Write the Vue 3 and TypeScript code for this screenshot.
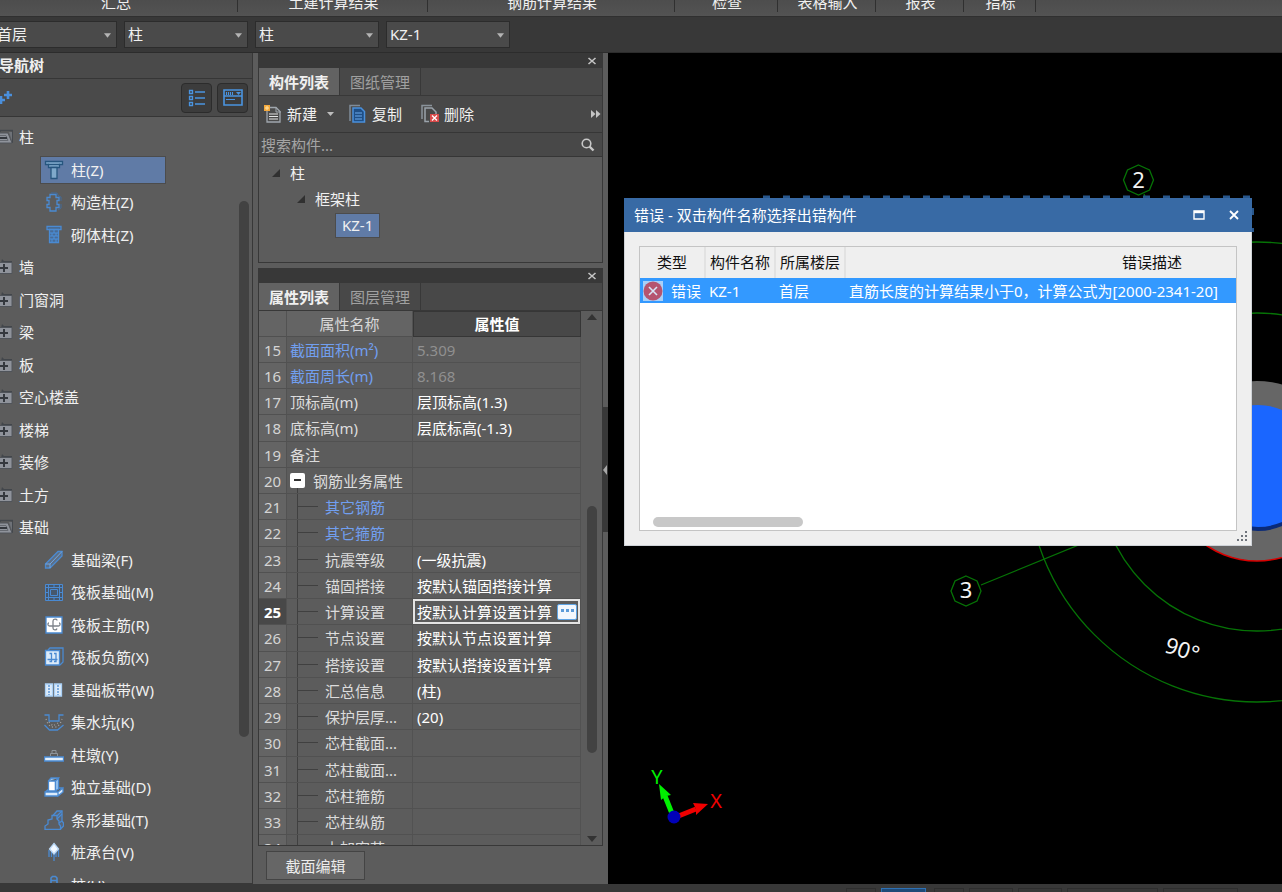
<script setup lang="ts">
import { ref } from 'vue'

interface NavItem {
  label: string
  icon: string
}
interface NavGroup {
  label: string
  open: boolean
  items: NavItem[]
}
interface PropRow {
  no: number
  name: string
  value: string
  kind?: 'readonly' | 'link' | 'group' | 'child' | 'childLink'
}

const ribbonGroups = [
  { label: '汇总', width: 'w-a' },
  { label: '土建计算结果', width: 'w-b' },
  { label: '钢筋计算结果', width: 'w-c' },
  { label: '检查', width: 'w-d' },
  { label: '表格输入', width: 'w-e' },
  { label: '报表', width: 'w-f' },
  { label: '指标', width: 'w-g' },
]

const pickers = [
  { name: '楼层', value: '首层' },
  { name: '构件分类', value: '柱' },
  { name: '构件类型', value: '柱' },
  { name: '构件', value: 'KZ-1' },
]

const closed = (label: string): NavGroup => ({ label, open: false, items: [] })

const navGroups: NavGroup[] = [
  {
    label: '柱',
    open: true,
    items: [
      { label: '柱(Z)', icon: 'column' },
      { label: '构造柱(Z)', icon: 'tie' },
      { label: '砌体柱(Z)', icon: 'brick' },
    ],
  },
  closed('墙'),
  closed('门窗洞'),
  closed('梁'),
  closed('板'),
  closed('空心楼盖'),
  closed('楼梯'),
  closed('装修'),
  closed('土方'),
  {
    label: '基础',
    open: true,
    items: [
      { label: '基础梁(F)', icon: 'beam' },
      { label: '筏板基础(M)', icon: 'raft' },
      { label: '筏板主筋(R)', icon: 'mainbar' },
      { label: '筏板负筋(X)', icon: 'negbar' },
      { label: '基础板带(W)', icon: 'strip' },
      { label: '集水坑(K)', icon: 'pit' },
      { label: '柱墩(Y)', icon: 'pier' },
      { label: '独立基础(D)', icon: 'isolated' },
      { label: '条形基础(T)', icon: 'stripfoot' },
      { label: '桩承台(V)', icon: 'cap' },
      { label: '桩(U)', icon: 'pile' },
    ],
  },
]

const navRows = navGroups.flatMap((g) => [
  { type: 'group', label: g.label, open: g.open, icon: '' },
  ...g.items.map((i) => ({ type: 'item', label: i.label, open: false, icon: i.icon })),
])

const activeNav = ref('柱(Z)')
const activeRow = ref(25)
const keyword = ref('')

const props: PropRow[] = [
  { no: 15, name: '截面面积(m²)', value: '5.309', kind: 'readonly' },
  { no: 16, name: '截面周长(m)', value: '8.168', kind: 'readonly' },
  { no: 17, name: '顶标高(m)', value: '层顶标高(1.3)' },
  { no: 18, name: '底标高(m)', value: '层底标高(-1.3)' },
  { no: 19, name: '备注', value: '' },
  { no: 20, name: '钢筋业务属性', value: '', kind: 'group' },
  { no: 21, name: '其它钢筋', value: '', kind: 'childLink' },
  { no: 22, name: '其它箍筋', value: '', kind: 'childLink' },
  { no: 23, name: '抗震等级', value: '(一级抗震)', kind: 'child' },
  { no: 24, name: '锚固搭接', value: '按默认锚固搭接计算', kind: 'child' },
  { no: 25, name: '计算设置', value: '按默认计算设置计算', kind: 'child' },
  { no: 26, name: '节点设置', value: '按默认节点设置计算', kind: 'child' },
  { no: 27, name: '搭接设置', value: '按默认搭接设置计算', kind: 'child' },
  { no: 28, name: '汇总信息', value: '(柱)', kind: 'child' },
  { no: 29, name: '保护层厚...', value: '(20)', kind: 'child' },
  { no: 30, name: '芯柱截面...', value: '', kind: 'child' },
  { no: 31, name: '芯柱截面...', value: '', kind: 'child' },
  { no: 32, name: '芯柱箍筋', value: '', kind: 'child' },
  { no: 33, name: '芯柱纵筋', value: '', kind: 'child' },
  { no: 34, name: '上加密范', value: '', kind: 'child' },
]

const isChild = (r: PropRow) => r.kind === 'child' || r.kind === 'childLink'
const isBlue = (r: PropRow) => r.kind === 'readonly' || r.kind === 'childLink'
</script>

<template>
  <div class="app">
    <header class="ribbon shifted">
      <div v-for="g in ribbonGroups" :key="g.label" class="ribbon-group" :class="g.width">{{ g.label }}</div>
    </header>

    <div class="pickers shifted">
      <label v-for="p in pickers" :key="p.name" class="picker">
        <select :aria-label="p.name">
          <option>{{ p.value }}</option>
        </select>
        <svg class="picker-arrow" viewBox="0 0 8 5" aria-hidden="true"><path d="M0 0h8L4 5z" fill="#b4b4b4" /></svg>
      </label>
    </div>

    <main class="work shifted">
      <nav class="nav">
        <h2 class="nav-title">导航树</h2>
        <div class="nav-tools">
          <button class="plain" aria-label="添加">
            <svg width="20" height="20" viewBox="0 0 20 20"><path d="M15 3v8M11 7h8M8 8v8M4 12h8" stroke="#4a8fdc" stroke-width="2.600" /></svg>
          </button>
          <span class="spacer"></span>
          <button class="view-btn" aria-label="列表视图">
            <svg width="18" height="18" viewBox="0 0 18 18" fill="none" stroke="#4a94e0">
              <path d="M1.500 1.500h3v3h-3zM1.500 7.500h3v3h-3zM1.500 13.500h3v3h-3z" stroke-width="1.300" />
              <path d="M7 3h10M7 9h10M7 15h10" stroke-width="1.400" />
            </svg>
          </button>
          <button class="view-btn" aria-label="面板视图">
            <svg width="20" height="18" viewBox="0 0 20 18" fill="none" stroke="#4a94e0">
              <path d="M1 1h18v15H1zM1 7h18" stroke-width="1.600" />
              <path d="M3.500 3v3M5.500 3v3M7.500 3v3M9.500 3v3M3 10.500h9" stroke-width="1.100" />
              <path d="M13 3h5l-2.500 3z" fill="#4a94e0" stroke="none" />
            </svg>
          </button>
        </div>
        <div class="nav-body">
          <ul class="nav-list">
            <li v-for="r in navRows" :key="r.label">
              <button v-if="r.type === 'group'" class="nav-group" :aria-expanded="r.open">
                <svg v-if="r.open" width="18" height="16" viewBox="0 0 18 16">
                  <path d="M5 3V1.500h12.500V14" fill="none" stroke="#44484d" stroke-width="1.500" />
                  <path d="M0 4h13l4 10H0z" fill="#8f939b" stroke="#50545a" />
                  <path d="M14 3h3v9z" fill="#6e7278" />
                  <path d="M0 6.500h11l2 5H0" fill="none" stroke="#666a71" />
                  <path d="M5 9h7" stroke="#34383e" stroke-width="2" />
                </svg>
                <svg v-else width="18" height="16" viewBox="0 0 18 16">
                  <path d="M6 4l1-4 2 2h8v2z" fill="#42464b" />
                  <path d="M0 3.500h17v11H0z" fill="#8f939b" stroke="#50545a" />
                  <path d="M5 9h8M9 5v8" stroke="#34383e" stroke-width="2" />
                </svg>
                <span>{{ r.label }}</span>
              </button>
              <button v-else class="nav-item" :class="{ active: r.label === activeNav }" @click="activeNav = r.label">
                <svg width="20" height="20" viewBox="0 0 20 20" fill="none" stroke="#4a8ad2" stroke-width="1.300">
                  <g v-if="r.icon === 'column'" fill="#7fa9cb" stroke="#27567f">
                    <path d="M1.500 1.500h17v3h-3v3h-11v-3h-3z" />
                    <path d="M4 4.500h12" />
                    <path d="M7 7.500h6v11H7z" />
                  </g>
                  <g v-else-if="r.icon === 'tie'">
                    <path d="M6 2.500h6v3h3v3h-2v4h2v3h-3v3.500H6v-3.500H3v-3h2v-4H3v-3h3z" />
                    <path d="M7 1h6l1.500 3 2.500 1v4M17 12v4l-3 2" stroke-width="0.800" stroke="#3e6ea8" />
                  </g>
                  <g v-else-if="r.icon === 'brick'">
                    <path d="M3 1.500h14v3H3z" fill="#48617f" />
                    <path d="M5.500 4.500h9v13h-9z" fill="#486c98" />
                    <path d="M5.500 8h9M5.500 11h9M5.500 14h9M10 5v3M8 8v3M12 8v3M10 11v3M8 14v3M12 14v3" stroke="#4a90dc" stroke-width="1" />
                  </g>
                  <g v-else-if="r.icon === 'beam'">
                    <path d="M1.500 14L14 1.500h4V6L6 18H1.500z" fill="#5d6f85" />
                    <path d="M1.500 14H6v4M6 14L18 1.500" stroke="#72a7e4" stroke-width="1" />
                  </g>
                  <g v-else-if="r.icon === 'raft'" stroke-width="1">
                    <path d="M1.500 2.500h17v16h-17z" fill="#46576c" />
                    <path d="M6.500 7.500h7v6h-7zM4.500 2.500v16M15.500 2.500v16M1.500 5.500h17M1.500 15.500h17" />
                    <path d="M10 2.500v3M10 15.500v3M1.500 10.500h3M15.500 10.500h3" />
                  </g>
                  <g v-else-if="r.icon === 'mainbar'">
                    <path d="M2 2h16v16H2z" fill="#fff" />
                    <path d="M13 5.500c0-2-4-2-4 .500v7c0 2.500 3.500 2.500 4 .500M5 8c-1.500 0-1.500 3 .500 3h9c2 0 2-3 .500-3" stroke="#7d838a" />
                  </g>
                  <g v-else-if="r.icon === 'negbar'">
                    <path d="M4 3L6 1h13v14l-3 3" />
                    <path d="M1.500 3.500h14V18h-14z" fill="#dcebfa" />
                    <path d="M3.500 12.500h10M5.500 6.500h2v8h-2M10 6.500h2v8h-2" />
                  </g>
                  <g v-else-if="r.icon === 'strip'">
                    <path d="M1.500 4h7v12h-7zM10.500 4h7v12h-7z" fill="#dcebfa" stroke="#a9cff5" />
                    <path d="M5 5v10M14 5v10" stroke-dasharray="2 1" />
                  </g>
                  <g v-else-if="r.icon === 'pit'">
                    <path d="M.500 3H5v6h10V3h4.500M.500 13l5 5h8l6-5" />
                    <path d="M2 7l2 5 3 3h6l3-3 2-5M5 10l4 4 5-3" stroke="#a0a0a0" stroke-dasharray="1 2.500" />
                  </g>
                  <g v-else-if="r.icon === 'pier'">
                    <path d="M8 5.500h4v3H8zM6.500 11V8.500h7V11" stroke="#8d949b" stroke-width="1" />
                    <path d="M.500 12h19v4H.500z" fill="#e4f0fc" />
                  </g>
                  <g v-else-if="r.icon === 'isolated'">
                    <path d="M1 15h13v4H1zM14 15l5-4v4l-5 4zM1 15l4-3h3M14 11l5 0" fill="#dcebfa" />
                    <path d="M4.500 4h7v10h-7z" fill="#fff" />
                    <path d="M4.500 4L7 1h7.500l-3 3v10l3-2V1" fill="#9cc6f0" />
                  </g>
                  <g v-else-if="r.icon === 'stripfoot'">
                    <path d="M9 5.500L13 1h5v10l1.500 2v3L16 19.500" fill="#5b6472" />
                    <path d="M1 19.500V16l3-2v-4l4-1V5.500h5V9l2 2v3l1.500 2v3.500z" fill="#5c5e62" />
                    <path d="M13 6l5-5M13 9l5-5M15 13l3-2" />
                  </g>
                  <g v-else-if="r.icon === 'cap'">
                    <path d="M5 8v7M14.500 8v7M7.500 9v6M12 9v6M10 11v8" stroke-width="1.300" />
                    <path d="M10 1.500L14.500 7l-4.500 5L5.500 7z" fill="#f2f8ff" stroke="#b8d6f5" />
                  </g>
                  <g v-else>
                    <path d="M7 6V3l1.500-1.500h3L13 3v16H7zM7 5.500h6" stroke-width="1.600" />
                  </g>
                </svg>
                <span>{{ r.label }}</span>
              </button>
            </li>
          </ul>
          <span class="nav-thumb"></span>
        </div>
      </nav>

      <section class="side">
        <div class="panel list-panel">
          <div class="panel-bar">
            <button class="plain" aria-label="关闭">
              <svg width="10" height="8" viewBox="0 0 10 8"><path d="M1.500 1l7 6M8.500 1l-7 6" stroke="#c4c4c4" stroke-width="1.600" /></svg>
            </button>
          </div>
          <div class="tabs" role="tablist">
            <button class="tab on" role="tab" aria-selected="true">构件列表</button>
            <button class="tab" role="tab" aria-selected="false">图纸管理</button>
          </div>
          <div class="tools">
            <button class="tool">
              <svg width="20" height="20" viewBox="0 0 20 20">
                <path d="M4 3.500h9l4 4V18H4z" fill="#4b4b4b" stroke="#a0a7ae" stroke-width="1.300" />
                <path d="M13 3v5h5" fill="none" stroke="#a0a7ae" />
                <path d="M6 10h9M6 12.500h9M6 15h9" stroke="#e4e4e4" />
                <path d="M1 1h6v6H1z" fill="#f3a83c" />
                <path d="M4 2v4M2 4h4" stroke="#ffe4a8" />
              </svg>
              <span>新建</span>
              <svg class="drop" width="7" height="4" viewBox="0 0 7 4"><path d="M0 0h7L3.500 4z" fill="#bdbdbd" /></svg>
            </button>
            <button class="tool">
              <svg width="20" height="20" viewBox="0 0 20 20">
                <path d="M2 17V1.500h10" fill="none" stroke="#7f8c99" stroke-width="1.500" />
                <path d="M5 4h8l3.500 3.500V18H5z" fill="#1f4f86" stroke="#4a90dc" stroke-width="1.500" />
                <path d="M7 9h7M7 12h7M7 15h7" stroke="#6cabed" stroke-width="1.200" />
              </svg>
              <span>复制</span>
            </button>
            <button class="tool">
              <svg width="20" height="20" viewBox="0 0 20 20">
                <path d="M2 15V1.500h10" fill="none" stroke="#8a939b" stroke-width="1.500" />
                <path d="M9 17.500H5V4h7l4 4v2" fill="none" stroke="#9aa3ab" stroke-width="1.500" />
                <path d="M10 10h9v8h-9z" fill="#d84a4a" />
                <path d="M12 11.500l5 5M17 11.500l-5 5" stroke="#fff" stroke-width="1.300" />
              </svg>
              <span>删除</span>
            </button>
            <button class="plain more" aria-label="更多">
              <svg width="10" height="8" viewBox="0 0 10 8"><path d="M0 0l4.500 4L0 8zM5 0l4.500 4L5 8z" fill="#c4c4c4" /></svg>
            </button>
          </div>
          <div class="search">
            <input v-model="keyword" type="text" aria-label="搜索构件" placeholder="搜索构件..." />
            <button class="plain" aria-label="搜索">
              <svg width="14" height="14" viewBox="0 0 14 14"><circle cx="5.500" cy="5.500" r="4.300" fill="none" stroke="#c8c8c8" stroke-width="1.600" /><path d="M8.500 8.500l4 4" stroke="#c8c8c8" stroke-width="2.400" /></svg>
            </button>
          </div>
          <ul class="comp-tree">
            <li class="lv1"><svg width="8" height="8" viewBox="0 0 8 8"><path d="M8 0v8H0z" fill="#303030" /></svg>柱</li>
            <li class="lv2"><svg width="8" height="8" viewBox="0 0 8 8"><path d="M8 0v8H0z" fill="#303030" /></svg>框架柱</li>
            <li class="lv3"><button class="comp">KZ-1</button></li>
          </ul>
        </div>

        <div class="panel prop-panel">
          <div class="panel-bar">
            <button class="plain" aria-label="关闭">
              <svg width="10" height="8" viewBox="0 0 10 8"><path d="M1.500 1l7 6M8.500 1l-7 6" stroke="#c4c4c4" stroke-width="1.600" /></svg>
            </button>
          </div>
          <div class="tabs" role="tablist">
            <button class="tab on" role="tab" aria-selected="true">属性列表</button>
            <button class="tab" role="tab" aria-selected="false">图层管理</button>
          </div>
          <div class="grid-wrap">
            <table class="grid">
              <colgroup><col class="c-no" /><col class="c-name" /><col /></colgroup>
              <thead>
                <tr><th class="h-no"></th><th class="h-name">属性名称</th><th class="h-val">属性值</th></tr>
              </thead>
              <tbody>
                <tr v-for="r in props" :key="r.no" :class="{ current: r.no === activeRow }" @click="activeRow = r.no">
                  <td class="no">{{ r.no }}</td>
                  <td class="name" :class="{ child: isChild(r), blue: isBlue(r), grp: r.kind === 'group' }">
                    <button v-if="r.kind === 'group'" class="fold" aria-label="收起"></button>{{ r.name }}
                  </td>
                  <td class="val" :class="{ dim: r.kind === 'readonly' }">
                    <div class="val-box">
                      <span>{{ r.value }}</span>
                      <button v-if="r.no === activeRow" class="dots" aria-label="编辑">
                        <i></i><i></i><i></i>
                      </button>
                    </div>
                  </td>
                </tr>
              </tbody>
            </table>
            <div class="grid-scroll">
              <svg width="10" height="6" viewBox="0 0 10 6"><path d="M0 6l5-6 5 6z" fill="#333" /></svg>
              <div class="grid-track"><span class="grid-thumb"></span></div>
              <svg width="10" height="6" viewBox="0 0 10 6"><path d="M0 0l5 6 5-6z" fill="#333" /></svg>
            </div>
          </div>
        </div>
        <div class="side-foot"><button class="edit">截面编辑</button></div>
        <button class="collapse" aria-label="折叠面板">
          <svg width="4" height="10" viewBox="0 0 4 10"><path d="M4 0v10L0 5z" fill="#a8a8a8" /></svg>
        </button>
      </section>

      <section class="canvas">
        <svg class="drawing" width="100%" height="100%">
          <g transform="translate(-608 -53)">
            <g fill="none" stroke="#067306" stroke-width="1.300">
              <circle cx="1257" cy="472" r="230" />
              <circle cx="1257" cy="472" r="159" />
              <path d="M981 585L1257 472M1144 194L1257 472" />
            </g>
            <circle cx="1257" cy="471" r="90" fill="#666" />
            <path d="M1167 471a90 90 0 0 0 180 0" fill="none" stroke="#d80000" stroke-width="1.500" />
            <circle cx="1258" cy="470" r="61" fill="#0a2a78" />
            <circle cx="1258" cy="466" r="61" fill="#1a66ff" />
            <path d="M763 197H1254" stroke="#28578c" stroke-width="3" stroke-dasharray="7 13" />
            <path d="M1252.500 208v7M1252.500 228v4" stroke="#28578c" stroke-width="3" />
            <g fill="#000" stroke="#067306" stroke-width="1.300">
              <path d="M1138.500 165l11 5 4 10-4 10-11 5-11-5-4-10 4-10z" />
              <path d="M966 576l11 5 4 10-4 10-11 5-11-5-4-10 4-10z" />
            </g>
            <g class="mark" fill="#f4f4f4" text-anchor="middle">
              <text x="1138.500" y="188">2</text>
              <text x="966" y="598">3</text>
              <text transform="translate(1180 657) rotate(18)">90°</text>
            </g>
            <path d="M673 816L665 796" stroke="#00f000" stroke-width="5" />
            <path d="M659 784l12 11-5 1-5 4z" fill="#00f000" />
            <path d="M676 817L696 809" stroke="#f00000" stroke-width="5" />
            <path d="M708 804l-15-1 3 6 0 6z" fill="#f00000" />
            <circle cx="674" cy="817" r="6.500" fill="#0000b8" />
            <g class="axis" text-anchor="middle">
              <text x="657" y="784" fill="#00f000">Y</text>
              <text x="716" y="808" fill="#f00000">X</text>
            </g>
          </g>
        </svg>

        <div class="dialog" role="dialog" aria-labelledby="err-title">
          <div class="dialog-bar">
            <h2 id="err-title">错误 - 双击构件名称选择出错构件</h2>
            <button class="plain" aria-label="最大化">
              <svg width="12" height="10" viewBox="0 0 12 10"><path d="M1 1h10v8H1z" fill="none" stroke="#fff" stroke-width="1.400" /><path d="M1 2h10" stroke="#fff" stroke-width="2.400" /></svg>
            </button>
            <button class="plain" aria-label="关闭">
              <svg width="10" height="10" viewBox="0 0 10 10"><path d="M1 1l8 8M9 1L1 9" stroke="#fff" stroke-width="1.800" /></svg>
            </button>
          </div>
          <div class="dialog-body">
            <div class="err-box">
              <table class="errs">
                <colgroup><col class="e-a" /><col class="e-b" /><col class="e-c" /><col /></colgroup>
                <thead>
                  <tr><th>类型</th><th>构件名称</th><th>所属楼层</th><th>错误描述</th></tr>
                </thead>
                <tbody>
                  <tr>
                    <td class="e-type">
                      <svg width="20" height="20" viewBox="0 0 20 20">
                        <path d="M0 0h20v20H0z" fill="#a9d0f8" />
                        <circle cx="10" cy="10" r="9.500" fill="#b55470" />
                        <path d="M6 6l8 8M14 6l-8 8" stroke="#d8e6f8" stroke-width="1.600" />
                      </svg>
                      <span>错误</span>
                    </td>
                    <td>KZ-1</td>
                    <td>首层</td>
                    <td>直筋长度的计算结果小于0，计算公式为[2000-2341-20]</td>
                  </tr>
                </tbody>
              </table>
              <span class="err-thumb"></span>
            </div>
            <svg class="grip" width="10" height="10" viewBox="0 0 10 10"><path d="M8 0h2v2H8zM4 4h2v2H4zM8 4h2v2H8zM0 8h2v2H0zM4 8h2v2H4zM8 8h2v2H8z" fill="#6f747c" /></svg>
          </div>
        </div>
      </section>
    </main>

    <footer class="status">
      <span class="s-a"></span><span class="s-b hot"></span><span class="s-c"></span><span class="s-d"></span><span class="s-d"></span><span class="s-e"></span><span class="s-f"></span>
    </footer>
  </div>
</template>

<style>
body {
  margin: 0;
  background: #383838;
}
</style>

<style scoped>
.app {
  display: flex;
  flex-direction: column;
  height: 100vh;
  overflow: hidden;
  background: #383838;
  color: #f0f0f0;
  font-family: "Noto Sans", "Noto Sans CJK SC", sans-serif;
  font-size: 15px;
  line-height: 20px;
}
.app *,
.app *::before,
.app *::after {
  box-sizing: border-box;
}
.shifted {
  margin-left: -7px;
}
button,
input,
select {
  font: inherit;
  color: inherit;
  margin: 0;
  padding: 0;
  border: 0;
  background: none;
}
button {
  display: flex;
  align-items: center;
}
svg {
  display: block;
  flex: none;
}
h2 {
  margin: 0;
  font-size: 15px;
}
ul {
  margin: 0;
  padding: 0;
  list-style: none;
}
.spacer {
  flex: 1;
}

.ribbon {
  display: flex;
  flex: 0 0 17px;
  overflow: hidden;
  background: linear-gradient(#4d4d4d, #535353);
  border-bottom: 1px solid #303030;
}
.ribbon-group {
  display: flex;
  justify-content: center;
  align-items: flex-end;
  height: 12px;
  padding-left: 2px;
  border-right: 1px solid #303030;
  white-space: nowrap;
}
.w-a { width: 245px; }
.w-b { width: 190px; }
.w-c { width: 247px; }
.w-d { width: 103px; }
.w-e { width: 98px; }
.w-f { width: 88px; }
.w-g { width: 72px; }

.pickers {
  display: flex;
  flex: 0 0 36px;
  align-items: center;
  gap: 7px;
  border-bottom: 1px solid #2c2c2c;
}
.picker {
  position: relative;
  width: 124px;
}
.picker select {
  width: 100%;
  height: 27px;
  padding: 0 3px 1px;
  appearance: none;
  background: #4a4a4a;
  border: 1px solid #2c2c2c;
}
.picker-arrow {
  position: absolute;
  right: 6px;
  top: 12px;
  width: 7px;
  height: 5px;
}

.work {
  display: flex;
  flex: 1;
  min-height: 0;
  background: #5c5c5c;
}

.nav {
  display: flex;
  flex-direction: column;
  flex: 0 0 260px;
  background: #5c5c5c;
  border-right: 1px solid #383838;
}
.nav-title {
  height: 26px;
  padding: 2px 6px;
  background: #4a4a4a;
  border-bottom: 1px solid #363636;
}
.nav-tools {
  display: flex;
  align-items: center;
  gap: 5px;
  height: 38px;
  padding: 0 4px 0 0;
  background: #4a4a4a;
  border-bottom: 1px solid #363636;
}
.view-btn {
  justify-content: center;
  width: 31px;
  height: 30px;
  background: #3c3c3c;
  border: 1px solid #2c2c2c;
  border-radius: 4px;
}
.nav-body {
  position: relative;
  flex: 1;
  min-height: 0;
  overflow: hidden;
  padding-top: 4px;
  border-bottom: 1px solid #383838;
}
.nav-list li {
  display: flex;
  align-items: center;
  height: 33px;
}
.nav-list li:nth-child(odd) {
  height: 32px;
}
.nav-group {
  gap: 6px;
  padding-left: 2px;
}
.nav-item {
  gap: 7px;
  width: 126px;
  height: 28px;
  margin-left: 47px;
  padding-left: 3px;
  border: 1px solid transparent;
  white-space: nowrap;
}
.nav-item.active {
  background: #607ba6;
  border-color: #4c4c4c;
}
.nav-thumb {
  position: absolute;
  right: 3px;
  top: 11%;
  width: 10px;
  height: 70%;
  border-radius: 5px;
  background: #424242;
}

.side {
  position: relative;
  display: flex;
  flex-direction: column;
  flex: 0 0 355px;
  padding: 0 5px;
  background: #5c5c5c;
}
.panel {
  display: flex;
  flex-direction: column;
  border: 1px solid #383838;
  border-top: 0;
  background: #5c5c5c;
}
.list-panel {
  flex: 0 0 210px;
  margin-bottom: 5px;
}
.prop-panel {
  flex: 1;
  min-height: 0;
}
.panel-bar {
  display: flex;
  flex: 0 0 15px;
  align-items: center;
  justify-content: flex-end;
  padding-right: 5px;
  background: #383838;
}
.tabs {
  display: flex;
  flex: 0 0 27px;
  background: #484848;
  border-bottom: 1px solid #383838;
}
.tab {
  justify-content: center;
  width: 81px;
  color: #a0a0a0;
  border-right: 1px solid #383838;
}
.tab.on {
  height: 27px;
  color: #f0f0f0;
  font-weight: 700;
  background: #626262;
}
.tools {
  display: flex;
  flex: 0 0 37px;
  align-items: center;
  gap: 18px;
  padding: 0 1px 0 4px;
  background: #484848;
  border-bottom: 1px solid #363636;
}
.tool {
  gap: 4px;
}
.tool .drop {
  margin-left: 6px;
}
.tools .tool:nth-child(2) {
  margin-left: -4px;
}
.more {
  margin-left: auto;
}
.search {
  display: flex;
  flex: 0 0 24px;
  align-items: center;
  padding: 0 7px 0 2px;
  background: #484848;
  border-bottom: 1px solid #363636;
}
.search input {
  flex: 1;
  min-width: 0;
  height: 22px;
  outline: 0;
}
.search input::placeholder {
  color: #a4a4a4;
  opacity: 1;
}
.comp-tree {
  padding-top: 3px;
}
.comp-tree li {
  display: flex;
  align-items: center;
  gap: 10px;
  height: 26px;
}
.lv1 { padding-left: 13px; }
.lv2 { padding-left: 38px; }
.lv3 { padding-left: 76px; }
.comp {
  height: 25px;
  padding: 0 6px;
  background: #607ba6;
  border: 1px solid #4c4c4c;
}

.grid-wrap {
  display: flex;
  flex: 1;
  min-height: 0;
  overflow: hidden;
}
.grid {
  flex: 1;
  align-self: flex-start;
  width: 0;
  table-layout: fixed;
  border-collapse: separate;
  border-spacing: 0;
}
.c-no { width: 28px; }
.c-name { width: 126px; }
.grid th {
  height: 26px;
  padding: 0;
  font-weight: 400;
  color: #d8d8d8;
  background: #646464;
  border-right: 1px solid #525252;
  border-bottom: 1px solid #505050;
}
.grid .h-val {
  color: #fff;
  font-weight: 700;
  background: #484848;
  border: 1px solid #363636;
}
.grid td {
  height: 26px;
  padding: 0;
  white-space: nowrap;
  overflow: hidden;
  border-right: 1px solid #525252;
  border-bottom: 1px solid #515151;
}
.grid tr:nth-child(4n) td {
  height: 27px;
}
.grid .no {
  padding-left: 5px;
  color: #d4d4d4;
  background: #646464;
}
.grid .name {
  padding-left: 3px;
  color: #dcdcdc;
}
.grid .name.blue {
  color: #719ff0;
}
.grid .name.child {
  padding-left: 38px;
  background:
    linear-gradient(#404040, #404040) 10px 0 / 1px 100% no-repeat,
    linear-gradient(#404040, #404040) 11px 12px / 20px 1px no-repeat;
}
.grid .name.grp {
  background: linear-gradient(#404040, #404040) 10px 20px / 1px 8px no-repeat;
}
.fold {
  display: inline-block;
  width: 15px;
  height: 15px;
  margin-right: 8px;
  vertical-align: -1px;
  border-radius: 2px;
  background: linear-gradient(#333, #333) center / 7px 2px no-repeat #fff;
}
.val-box {
  display: flex;
  align-items: center;
  height: 25px;
  padding-left: 4px;
  color: #fff;
}
.dim .val-box {
  color: #909090;
}
.grid .current .no {
  color: #fff;
  font-weight: 700;
  background: #484848;
}
.current .val-box {
  gap: 5px;
  padding-left: 2px;
  border: 2px solid #e4e4e4;
}
.dots {
  justify-content: center;
  gap: 2px;
  width: 20px;
  height: 16px;
  padding-bottom: 2px;
  border: 1px solid #5fa4e4;
  border-radius: 2px;
  background: #f2f7fd;
}
.dots i {
  width: 3px;
  height: 3px;
  background: #5c9bd8;
}
.grid-scroll {
  display: flex;
  flex-direction: column;
  align-items: center;
  flex: 0 0 21px;
  padding: 3px 0;
}
.grid-track {
  position: relative;
  flex: 1;
  width: 10px;
}
.grid-thumb {
  position: absolute;
  left: 0;
  top: 36%;
  width: 10px;
  height: 48%;
  border-radius: 5px;
  background: #424242;
}
.side-foot {
  flex: 0 0 38px;
  padding: 5px 8px 3px;
}
.edit {
  justify-content: center;
  width: 99px;
  height: 29px;
  background: #666;
  border: 1px solid #444;
  color: #ececec;
}
.collapse {
  position: absolute;
  right: 0;
  top: 354px;
  width: 5px;
  height: 125px;
  background: #383838;
}

.canvas {
  position: relative;
  flex: 1;
  min-width: 0;
  overflow: hidden;
  background: #000;
}
.drawing {
  position: absolute;
  inset: 0;
}
.mark {
  font-size: 22px;
}
.axis {
  font-size: 20px;
}

.dialog {
  position: absolute;
  left: 16px;
  top: 145px;
  display: flex;
  flex-direction: column;
  width: 628px;
  height: 348px;
  background: #efefef;
  border: 1px solid #cfd3d8;
  border-top: 0;
  color: #111;
}
.dialog-bar {
  display: flex;
  flex: 0 0 34px;
  align-items: center;
  gap: 30px;
  margin: 0 -1px;
  padding: 0 13px 0 10px;
  background: #386aa5;
  color: #fff;
}
.dialog-bar h2 {
  flex: 1;
  font-weight: 400;
}
.dialog-bar .plain + .plain {
  margin-left: -6px;
}
.dialog-body {
  position: relative;
  flex: 1;
  min-height: 0;
  padding: 14px;
}
.err-box {
  position: relative;
  height: 100%;
  overflow: hidden;
  background: #fff;
  border: 1px solid #c4c4c4;
}
.errs {
  width: 820px;
  table-layout: fixed;
  border-collapse: separate;
  border-spacing: 0;
}
.e-a { width: 66px; }
.e-b { width: 70px; }
.e-c { width: 70px; }
.errs th {
  height: 31px;
  padding: 0 0 2px;
  font-weight: 400;
  background: #efefef;
  border-right: 2px solid #e2e2e2;
}
.errs td {
  height: 25px;
  padding: 0 0 0 3px;
  color: #fff;
  background: #3399ff;
  white-space: nowrap;
}
.errs .e-type {
  display: flex;
  align-items: center;
  gap: 8px;
}
.err-thumb {
  position: absolute;
  left: 13px;
  bottom: 3px;
  width: 150px;
  height: 10px;
  border-radius: 5px;
  background: #c8c8c8;
}
.grip {
  position: absolute;
  right: 4px;
  bottom: 4px;
}

.status {
  display: flex;
  flex: 0 0 8px;
  justify-content: flex-end;
  gap: 5px;
  padding: 4px 44px 0 0;
  overflow: hidden;
  background: #383838;
}
.status span {
  height: 20px;
  border: 1px solid #2e2e2e;
}
.status .hot {
  background: #1f4a78;
  border-color: #2e71b4;
}
.s-a { width: 30px; }
.s-b { width: 45px; }
.s-c { width: 30px; margin-left: 3px; }
.s-d { width: 44px; }
.s-e { width: 91px; }
.s-f { width: 75px; }
</style>
